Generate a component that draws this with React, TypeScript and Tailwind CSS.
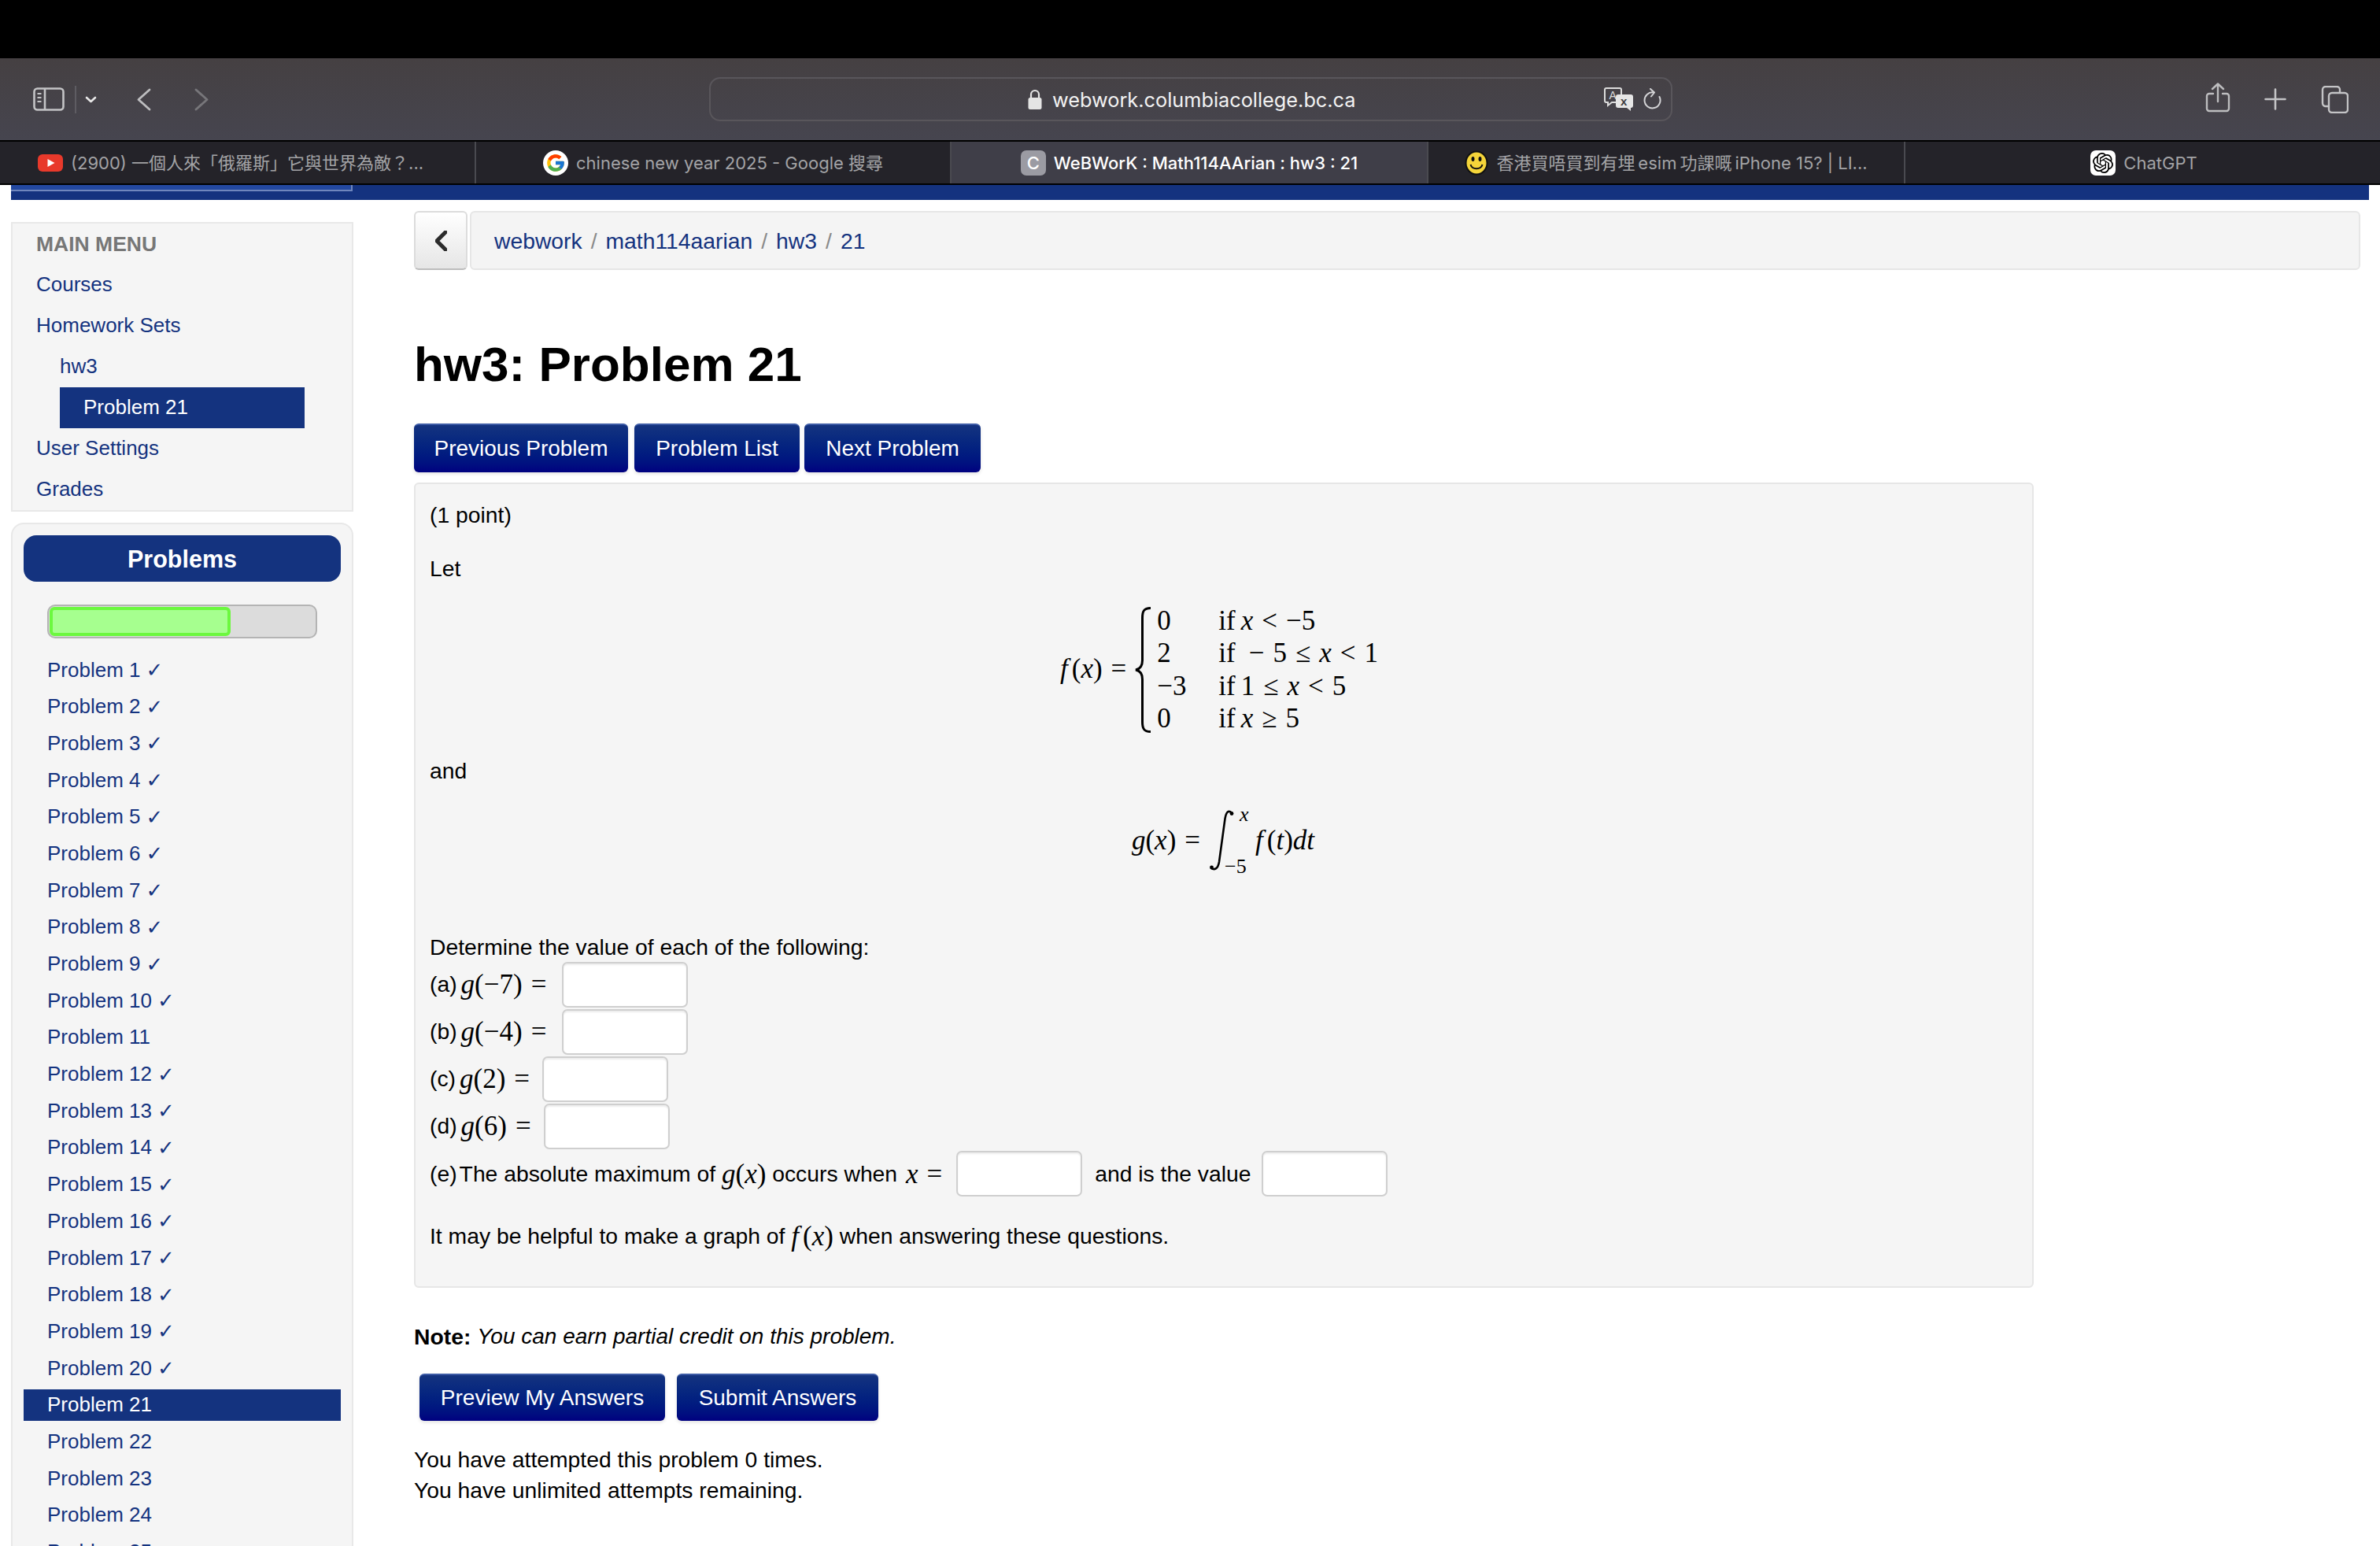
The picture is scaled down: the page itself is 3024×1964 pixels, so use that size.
import React from "react";
import { FcGoogle } from "react-icons/fc";
import { SiOpenai } from "react-icons/si";

const sans = "font-['Liberation_Sans',Arial,sans-serif]";
const serif = "font-['Liberation_Serif','Times_New_Roman',serif]";
const ui = "font-['Inter','Noto_Sans_CJK_TC',sans-serif]";

function I({ children }: { children: React.ReactNode }) {
  return <span className="italic">{children}</span>;
}
function F() {
  return <span className="italic mr-[5px]">f</span>;
}
function R({ children }: { children: React.ReactNode }) {
  return <span className="mx-[11px]">{children}</span>;
}
function M({ children, className = "" }: { children: React.ReactNode; className?: string }) {
  return <span className={`${serif} text-[35px] leading-none text-black whitespace-pre ${className}`}>{children}</span>;
}
function Box({ className = "" }: { className?: string }) {
  return (
    <input
      readOnly
      aria-label="answer"
      className={`w-[160px] h-[58px] shrink-0 bg-white border-2 border-[#cfcfcf] rounded-[7px] shadow-[inset_0_2px_2px_rgba(0,0,0,0.08)] ${className}`}
    />
  );
}
function NavBtn({ children, w, className = "" }: { children: React.ReactNode; w: string; className?: string }) {
  return (
    <button className={`${w} h-full rounded-[6px] text-white text-[28px] border-t-2 border-t-[#3c5aa5] bg-linear-to-b from-[#14337f] to-[#000080] shadow-[0_2px_4px_rgba(0,0,0,0.12)] ${className}`}>
      {children}
    </button>
  );
}

function SidebarIcon() {
  return (
    <svg width="40" height="30" viewBox="0 0 40 30" fill="none" stroke="#c4c4c6" strokeWidth="2.6">
      <rect x="1.500" y="1.500" width="37" height="27" rx="4" />
      <path d="M15 1.500v27" />
      <path d="M5.500 8h5M5.500 13h5M5.500 18h5" strokeWidth="2" />
    </svg>
  );
}
function Chev({ dir, color, w, h, sw }: { dir: "l" | "r" | "d"; color: string; w: number; h: number; sw: number }) {
  const d =
    dir === "l"
      ? `M${w - 2} 2L2 ${h / 2}L${w - 2} ${h - 2}`
      : dir === "r"
      ? `M2 2L${w - 2} ${h / 2}L2 ${h - 2}`
      : `M2 2L${w / 2} ${h - 2}L${w - 2} 2`;
  return (
    <svg width={w} height={h} viewBox={`0 0 ${w} ${h}`} fill="none" stroke={color} strokeWidth={sw} strokeLinecap="round" strokeLinejoin="round">
      <path d={d} />
    </svg>
  );
}

function Tab({ icon, text, active = false, className = "" }: { icon: React.ReactNode; text: string; active?: boolean; className?: string }) {
  return (
    <div className={`h-full flex items-center gap-[10px] border-r-2 border-r-[#4a4a50] ${active ? "bg-[#3f3e48] text-white font-medium" : "text-[#a3a3a6]"} ${className}`}>
      {icon}
      <span className="whitespace-pre text-[22px]">{text}</span>
    </div>
  );
}

function Brace() {
  return (
    <svg width="22" height="160" viewBox="0 0 22 160" fill="none" stroke="#000" className="shrink-0">
      <path d="M20 1.500C11 1.500 9.500 6 9.500 14V68C9.500 75 6 79 1 80C6 81 9.500 85 9.500 92V146C9.500 154 11 158.500 20 158.500" strokeWidth="3" />
    </svg>
  );
}
function Integral() {
  return (
    <svg width="34" height="78" viewBox="0 0 34 78" fill="none" className="shrink-0">
      <path d="M29 3.500C25 0 22 2 20.500 11L13 66C11.500 75 7 77 2.500 73.500" stroke="#000" strokeWidth="2.600" />
      <circle cx="29" cy="4.500" r="2.400" fill="#000" />
      <circle cx="3.500" cy="73" r="2.400" fill="#000" />
    </svg>
  );
}

const rows: [string, React.ReactNode][] = [
  ["0", <>if<span className="ml-[7px]" /><I>x</I><R>&lt;</R>−5</>],
  ["2", <>if<span className="ml-[6px]" /><R>−</R>5<R>≤</R><I>x</I><R>&lt;</R>1</>],
  ["−3", <>if<span className="ml-[7px]" />1<R>≤</R><I>x</I><R>&lt;</R>5</>],
  ["0", <>if<span className="ml-[7px]" /><I>x</I><R>≥</R>5</>],
];

export default function App() {
  const problems = Array.from({ length: 25 }, (_, i) => i + 1);
  return (
    <div className={`w-[3024px] h-[1964px] overflow-hidden bg-white ${sans}`}>
      <div className="h-[74px] bg-black" />
      {/* Toolbar */}
      <div className="h-[104px] bg-linear-to-b from-[#454042] to-[#46454f] flex items-center">
        <div className="ml-[42px] w-[40px]"><SidebarIcon /></div>
        <div className="ml-[13px] w-[2px] h-[35px] bg-[#5e5c62]" />
        <div className="ml-[11px]"><Chev dir="d" color="#e8e8e8" w={15} h={9} sw={2.6} /></div>
        <div className="ml-[51px]"><Chev dir="l" color="#bdbdbf" w={18} h={29} sw={2.8} /></div>
        <div className="ml-[55px]"><Chev dir="r" color="#77767a" w={18} h={29} sw={2.8} /></div>
        <div className="ml-[636px] w-[1224px] h-[56px] rounded-[14px] border-2 border-[#59565b] flex items-center">
          <div className="ml-[403px] flex items-center gap-[13px] text-white">
            <svg width="18" height="26" viewBox="0 0 18 26" fill="none">
              <path d="M4 12V7a5 5 0 0 1 10 0v5" stroke="#e4e4e4" strokeWidth="2.200" />
              <rect x="0.500" y="11" width="17" height="15" rx="2.500" fill="#e4e4e4" />
            </svg>
            <span className={`${ui} text-[25.300px] text-[#f2f2f2] pt-[2px]`}>webwork.columbiacollege.bc.ca</span>
          </div>
          <div className="ml-auto mr-[12px] flex items-center gap-[11px]">
            <svg width="38" height="30" viewBox="0 0 38 30">
              <path d="M3 1h17a2 2 0 0 1 2 2v14a2 2 0 0 1-2 2H10l-5 4v-4H3a2 2 0 0 1-2-2V3a2 2 0 0 1 2-2z" fill="none" stroke="#dcdcdc" strokeWidth="2" />
              <text x="6.500" y="15" fontSize="14" fill="#dcdcdc" fontFamily="Liberation Sans">A</text>
              <path d="M18 9h16a3 3 0 0 1 3 3v11a3 3 0 0 1-3 3v4l-5-4H18a3 3 0 0 1-3-3V12a3 3 0 0 1 3-3z" fill="#e6e6e6" />
              <text x="21" y="23" fontSize="15" fontWeight="700" fill="#3e3c40" fontFamily="Liberation Sans">x</text>
            </svg>
            <svg width="24" height="28" viewBox="0 0 24 28" fill="none" stroke="#d4d4d6" strokeWidth="2" strokeLinecap="round" strokeLinejoin="round">
              <path d="M14 5.500A10 10 0 1 0 21.500 11" />
              <path d="M10 1l5 4.500-4 5" />
            </svg>
          </div>
        </div>
        <div className="ml-[677px] -mt-[5px]">
          <svg width="32" height="38" viewBox="0 0 32 38" fill="none" stroke="#bdbdbf" strokeWidth="2.400" strokeLinecap="round" strokeLinejoin="round">
            <path d="M10 14H5a3 3 0 0 0-3 3v16a3 3 0 0 0 3 3h22a3 3 0 0 0 3-3V17a3 3 0 0 0-3-3h-5" />
            <path d="M16 24V2M9 8l7-6.500 7 6.500" />
          </svg>
        </div>
        <div className="ml-[43px] -mt-[1px]">
          <svg width="28" height="28" viewBox="0 0 28 28" stroke="#c4c4c6" strokeWidth="2.600" strokeLinecap="round">
            <path d="M14 1.500v25M1.500 14h25" />
          </svg>
        </div>
        <div className="ml-[44px]">
          <svg width="35" height="35" viewBox="0 0 35 35" fill="none" stroke="#c4c4c6" strokeWidth="2.400">
            <rect x="10" y="9" width="24" height="25" rx="4" />
            <path d="M10 26H6a4 4 0 0 1-4-4V5a4 4 0 0 1 4-4h14a4 4 0 0 1 4 4v4" />
          </svg>
        </div>
      </div>
      {/* Tabs */}
      <div className={`h-[57px] bg-[#242329] border-y-2 border-black flex ${ui} leading-none`}>
        <Tab
          className="w-[605px] pl-[48px]"
          icon={
            <svg width="32" height="22" viewBox="0 0 32 22" className="shrink-0">
              <rect width="32" height="22" rx="6" fill="#e8392b" />
              <path d="M12.500 6l9 5-9 5z" fill="#fff" />
            </svg>
          }
          text="(2900) 一個人來「俄羅斯」它與世界為敵？..."
        />
        <Tab
          className="w-[604px] justify-center"
          icon={
            <span className="w-[32px] h-[32px] rounded-full bg-white flex items-center justify-center shrink-0">
              <FcGoogle size={26} />
            </span>
          }
          text="chinese new year 2025 - Google 搜尋"
        />
        <Tab
          active
          className="w-[606px] justify-center"
          icon={
            <span className="w-[32px] h-[32px] rounded-[7px] bg-[#9b9ba3] text-white text-[22px] flex items-center justify-center shrink-0">C</span>
          }
          text="WeBWorK : Math114AArian : hw3 : 21"
        />
        <Tab
          className="w-[606px] justify-center"
          icon={
            <svg width="30" height="32" viewBox="0 0 30 32" className="shrink-0">
              <ellipse cx="15" cy="16" rx="14.500" ry="15.500" fill="#111" />
              <ellipse cx="15" cy="16" rx="12.500" ry="13.500" fill="#f5d53a" />
              <ellipse cx="10.500" cy="11" rx="2" ry="3" fill="#111" />
              <ellipse cx="19.500" cy="11" rx="2" ry="3" fill="#111" />
              <path d="M7.500 18c2 7 13 7 15 0" fill="none" stroke="#111" strokeWidth="2" />
            </svg>
          }
          text={"香港買唔買到有埋\u2009esim\u2009功課嘅\u2009iPhone 15? | LI..."}
        />
        <div className="flex-1 h-full flex items-center justify-center gap-[10px] text-[#a3a3a6] pl-[3px]">
          <span className="w-[32px] h-[32px] rounded-[7px] bg-white flex items-center justify-center text-black">
            <SiOpenai size={26} />
          </span>
          <span className="text-[22px]">ChatGPT</span>
        </div>
      </div>
      {/* Blue band */}
      <div className="mx-[14px] h-[19px] bg-[#14327f]">
        <div className="w-[434px] h-[8px] bg-[#2348a0] border-b-2 border-r-2 border-[#6f86bd]" />
      </div>

      {/* Page */}
      <div className="flex pl-[14px]">
        {/* Sidebar */}
        <aside className="w-[435px] shrink-0 pt-[28px] text-[26px] text-[#14337f]">
          <div className="h-[368px] bg-[#f5f5f5] border-2 border-[#e8e8e8] pl-[30px] pt-[1px]">
            <div className="h-[50px] pt-[2px] flex items-center font-bold text-[#777] text-[26.500px]">MAIN MENU</div>
            <div className="h-[52px] flex items-center">Courses</div>
            <div className="h-[52px] flex items-center">Homework Sets</div>
            <div className="h-[52px] flex items-center pl-[30px]">hw3</div>
            <div className="h-[52px] w-[311px] ml-[30px] pl-[30px] flex items-center bg-[#14337f] text-white translate-y-[1px] pb-[2px]">Problem 21</div>
            <div className="h-[52px] flex items-center">User Settings</div>
            <div className="h-[52px] flex items-center">Grades</div>
          </div>
          <div className="mt-[14px] h-[1400px] bg-[#f5f5f5] border-2 border-[#e8e8e8] rounded-t-[16px] px-[14px] pt-[14px]">
            <div className="h-[59px] rounded-[16px] bg-[#14337f] text-white text-[30.500px] font-bold flex items-center justify-center pt-[2px]">Problems</div>
            <div className="mt-[29px] ml-[30px] w-[343px] h-[43px] rounded-[10px] bg-[#dcdcdc] border-2 border-[#b4b4b4] p-[1px]">
              <div className="w-[230px] h-full rounded-[6px] bg-[#a6ff8f] border-4 border-[#6cf83f]" />
            </div>
            <div className="mt-[20px]">
              {problems.map((n) => {
                const cur = n === 21;
                const done = n <= 20 && n !== 11;
                return (
                  <div key={n} className={`h-[40px] mb-[6.700px] flex items-center pl-[30px] ${cur ? "bg-[#14337f] text-white" : ""}`}>
                    <span>Problem {n}</span>
                    {done && <span className="ml-[7px] font-['DejaVu_Sans',sans-serif] font-bold text-[26px] leading-none">✓</span>}
                  </div>
                );
              })}
            </div>
          </div>
        </aside>

        {/* Main */}
        <main className="ml-[77px] w-[2473px] pt-[14px] text-[28.300px] text-black">
          <div className="flex h-[75px] gap-[3px]">
            <div className="w-[68px] rounded-[6px] border-2 border-[#dcdcdc] border-b-[#bdbdbd] bg-linear-to-b from-white to-[#e6e6e6] flex items-center justify-center">
              <Chev dir="l" color="#2b2b2b" w={15} h={26} sw={5} />
            </div>
            <div className="flex-1 rounded-[6px] bg-[#f4f4f4] border-2 border-[#e6e6e6] flex items-center pl-[29px] pr-4 pt-[2px] text-[#14337f]">
              <span>webwork</span>
              <span className="mx-[11px] text-[#8a8a8a]">/</span>
              <span>math114aarian</span>
              <span className="mx-[11px] text-[#8a8a8a]">/</span>
              <span>hw3</span>
              <span className="mx-[11px] text-[#8a8a8a]">/</span>
              <span>21</span>
            </div>
          </div>

          <h1 className="mt-[80px] h-[80px] flex items-center text-[62px] font-bold leading-none">hw3: Problem 21</h1>

          <div className="mt-[35px] h-[62px] flex gap-[8px]">
            <NavBtn w="w-[272px]">Previous Problem</NavBtn>
            <NavBtn w="w-[210px]">Problem List</NavBtn>
            <NavBtn w="w-[224px]" className="-ml-[2px]">Next Problem</NavBtn>
          </div>

          <div className="mt-[13px] w-[2058px] h-[1023px] bg-[#f5f5f5] border-2 border-[#e6e6e6] rounded-[6px] pl-[18px] pt-[19px]">
            <div className="h-[40px] flex items-center">(1 point)</div>
            <div className="mt-[27px] h-[40px] flex items-center pt-[2px]">Let</div>

            <div className="mt-[27px] h-[165px] flex items-center justify-center pr-[30px]">
              <div className={`flex items-center ${serif} text-[35px]`}>
                <span className="whitespace-pre"><F />(<I>x</I>)<span className="ml-[11px]">=</span></span>
                <div className="ml-[11px]"><Brace /></div>
                <div className="ml-[6px] grid grid-cols-[78px_auto] grid-rows-[repeat(4,41.300px)] items-center leading-none">
                  {rows.map(([a, b], i) => (
                    <React.Fragment key={i}>
                      <span>{a}</span>
                      <span className="whitespace-pre">{b}</span>
                    </React.Fragment>
                  ))}
                </div>
              </div>
            </div>

            <div className="mt-[25px] h-[40px] flex items-center pt-[2px]">and</div>

            <div className="mt-[28px] h-[84px] flex items-center justify-center pr-[20px]">
              <div className={`flex items-center ${serif} text-[35px]`}>
                <span className="whitespace-pre"><I>g</I>(<I>x</I>)<span className="ml-[11px]">=</span></span>
                <div className="ml-[11px]"><Integral /></div>
                <div className="w-[40px] h-[92px] -ml-[14px] flex flex-col justify-between text-[26px] leading-none">
                  <span className="italic pl-[20px] -translate-x-[1px]">x</span>
                  <span>−5</span>
                </div>
                <span className="whitespace-pre -ml-[1px]"><F />(<I>t</I>)<I>dt</I></span>
              </div>
            </div>

            <div className="mt-[72px] h-[40px] flex items-center pt-[2px]">Determine the value of each of the following:</div>

            <div className="h-[60px] flex items-start">
              <div className="h-[56px] flex items-center gap-[5px]"><span>(a)</span><M><I>g</I>(−7)<R>=</R></M></div>
              <Box className="ml-[9px]" />
            </div>
            <div className="h-[60px] flex items-start">
              <div className="h-[56px] flex items-center gap-[5px]"><span>(b)</span><M><I>g</I>(−4)<R>=</R></M></div>
              <Box className="ml-[9px]" />
            </div>
            <div className="h-[60px] flex items-start">
              <div className="h-[56px] flex items-center gap-[5px]"><span>(c)</span><M><I>g</I>(2)<R>=</R></M></div>
              <Box className="ml-[5px]" />
            </div>
            <div className="h-[60px] flex items-start">
              <div className="h-[56px] flex items-center gap-[5px]"><span>(d)</span><M><I>g</I>(6)<R>=</R></M></div>
              <Box className="ml-[5px]" />
            </div>
            <div className="h-[60px] flex items-start">
              <div className="h-[58px] flex items-center whitespace-pre">
                <span>(e)</span><span className="ml-[3px]">The absolute maximum of </span><M><I>g</I>(<I>x</I>)</M><span> occurs when </span><M className="ml-[3px]"><I>x</I><R>=</R></M>
              </div>
              <Box className="ml-[7px]" />
              <div className="h-[58px] flex items-center ml-[16px]">and is the value</div>
              <Box className="ml-[14px]" />
            </div>

            <div className="mt-[28px] h-[40px] flex items-center whitespace-pre">
              <span>It may be helpful to make a graph of </span><M><F />(<I>x</I>)</M><span> when answering these questions.</span>
            </div>
          </div>

          <div className="mt-[41px] h-[40px] flex items-center whitespace-pre pt-[2px]">
            <b>Note: </b><i className="text-[28px]">You can earn partial credit on this problem.</i>
          </div>

          <div className="mt-[28px] ml-[7px] h-[60px] flex gap-[15px]">
            <NavBtn w="w-[312px]">Preview My Answers</NavBtn>
            <NavBtn w="w-[256px]">Submit Answers</NavBtn>
          </div>

          <div className="mt-[28px] h-[40px] flex items-center pt-[2px]">You have attempted this problem 0 times.</div>
          <div className="h-[40px] flex items-center pt-[1px]">You have unlimited attempts remaining.</div>
        </main>
      </div>
    </div>
  );
}
